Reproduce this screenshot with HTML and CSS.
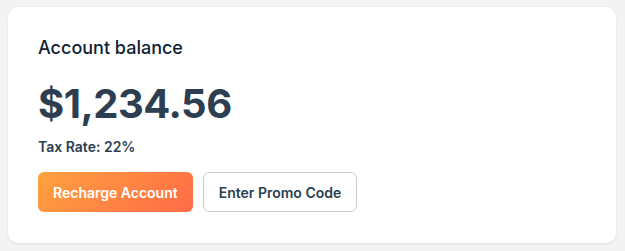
FILE: index.html
```html
<!DOCTYPE html>
<html>
<head>
<meta charset="utf-8">
<link rel="stylesheet" href="styles.css">
</head>
<body>
<div class="card">
  <h2 class="title">Account balance</h2>
  <div class="amount">$1,234.56</div>
  <div class="tax">Tax Rate: 22%</div>
  <div class="actions">
    <button class="btn btn-primary">Recharge Account</button>
    <button class="btn btn-outline">Enter Promo Code</button>
  </div>
</div>
</body>
</html>
```
FILE: styles.css
```css
html, body {
  margin: 0;
  background: #f3f3f3;
}
body {
  padding: 7px 9px 8px 8px;
  font-family: Inter, "Noto Sans", sans-serif;
}
.card {
  background: #ffffff;
  border-radius: 10px;
  box-shadow: 0 1px 3px rgba(0,0,0,0.08);
  height: 236px;
  box-sizing: border-box;
  padding: 29px 30px;
}
.title {
  margin: 0;
  font-size: 18px;
  line-height: 24px;
  font-weight: 500;
  color: #0f1f33;
}
.amount {
  margin-top: 20px;
  font-size: 40px;
  line-height: 48px;
  font-weight: 700;
  letter-spacing: -0.5px;
  color: #2c3e50;
}
.tax {
  margin-top: 9px;
  font-size: 14px;
  line-height: 20px;
  font-weight: 600;
  color: #2c3e50;
}
.actions {
  display: flex;
  gap: 10px;
  margin-top: 15px;
}
.btn {
  height: 40px;
  padding: 0 15px;
  border-radius: 6px;
  font-family: Inter, "Noto Sans", sans-serif;
  font-size: 14px;
  font-weight: 600;
  white-space: nowrap;
  cursor: pointer;
}
.btn-primary {
  border: none;
  color: #ffffff;
  background: linear-gradient(135deg, #ffa23f 0%, #ff6b47 100%);
}
.btn-outline {
  padding: 0 15px;
  background: #ffffff;
  border: 1px solid #c6cbd3;
  color: #2c3e50;
}
```
